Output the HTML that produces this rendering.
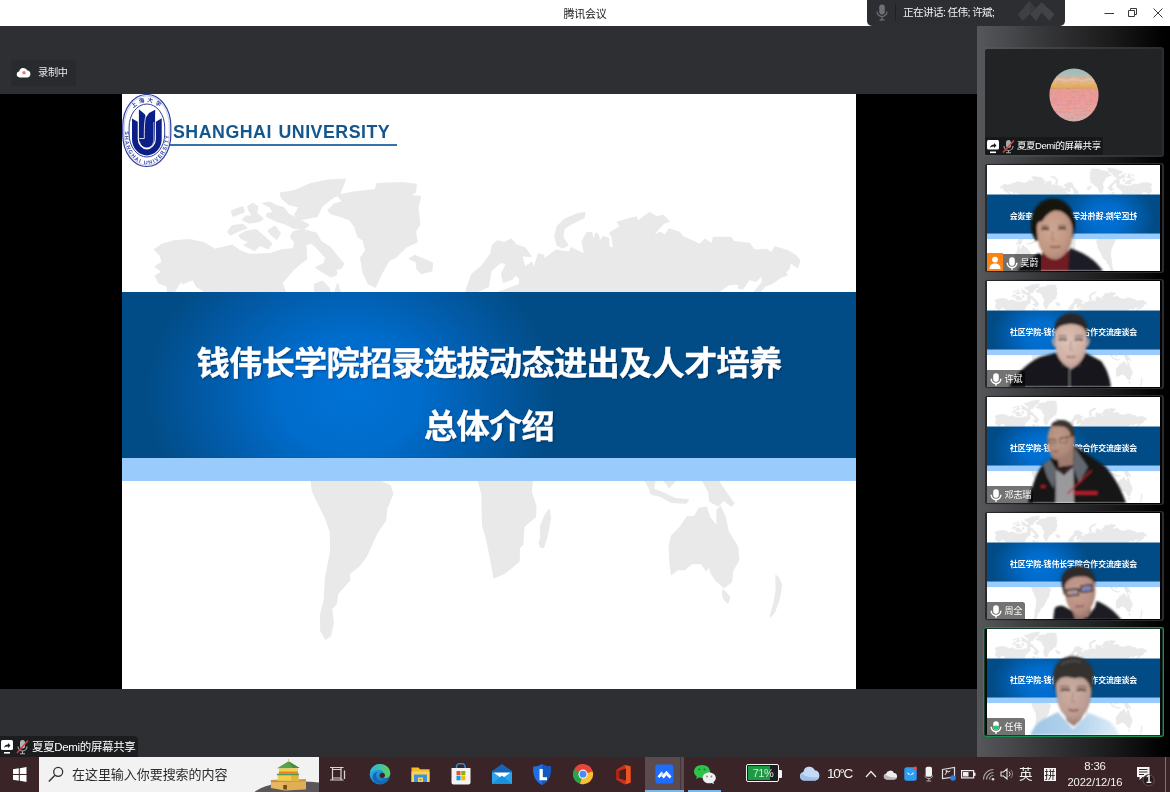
<!DOCTYPE html>
<html lang="zh-CN"><head><meta charset="utf-8"><title>腾讯会议</title>
<style>
html,body{margin:0;padding:0}
body{will-change:transform;width:1170px;height:792px;overflow:hidden;position:relative;background:#2e2f33;font-family:"Liberation Sans","Noto Sans CJK SC",sans-serif;color:#fff}
.a{position:absolute}
svg{display:block;position:absolute;overflow:hidden}
#titlebar{left:0;top:0;width:1170px;height:26px;background:#fff}
#title{left:535px;top:5.5px;width:100px;text-align:center;font-size:11px;line-height:16px;color:#1a1a1a;letter-spacing:-0.3px}
#speak{left:867px;top:0;width:198px;height:26px;background:#2d2e32;border-radius:0 0 5px 5px}
#speak .t{left:36px;top:4px;font-size:10.6px;line-height:16px;color:#f0f0f0;white-space:nowrap;letter-spacing:-0.62px}
#speak .sep{left:28px;top:4px;width:1px;height:17px;background:#1f2023}
#blackL{left:0;top:94px;width:122px;height:595px;background:#000}
#blackR{left:856px;top:94px;width:121px;height:595px;background:#000}
#rec{left:11px;top:60px;width:65px;height:26px;background:#292a2e;border-radius:3px}
#rec .t{left:27px;top:5px;font-size:10.2px;line-height:16px;color:#e6e6e6;white-space:nowrap;letter-spacing:-0.3px}
#slide{left:122px;top:94px;width:734px;height:595px;background:#fff;overflow:hidden}
#hdr{left:51px;top:26px;font-size:17.8px;line-height:24px;font-weight:bold;color:#14578f;letter-spacing:.5px;word-spacing:1.2px;white-space:nowrap}
#hline{left:48px;top:49.5px;width:227px;height:2px;background:#3671aa}
.ttl{left:0;width:734px;text-align:center;font-weight:bold;color:#fff;font-size:33.3px;letter-spacing:-.8px;line-height:44px;white-space:nowrap;-webkit-text-stroke:.35px #fff;text-shadow:1px 1px 2px rgba(0,20,60,.55)}
#panel{left:977px;top:26px;width:193px;height:731px;background:linear-gradient(90deg,#56575b 0%,#494a4d 15%,#3a3b3d 30%,#2a2a2c 50%,#1a1a1b 70%,#0c0c0c 85%,#000 97%)}
.tile{left:6px;width:181px;height:110px;border-radius:3px;background:linear-gradient(90deg,rgba(44,45,48,0) 0%,rgba(44,45,48,.6) 40%,#2c2d30 75%)}
.frame{left:2px;top:1px;width:177px;height:108px;border-radius:2px;background:linear-gradient(90deg,#2a2b2d 0%,#0c0c0d 45%,#000 70%)}
.tile.act{background:#0a0a0b;box-shadow:inset 0 0 0 1px #1d8f55,inset 0 0 0 2px rgba(29,143,85,.4)}
.tile.act .frame{display:none}
.vid{left:4px;top:2px;width:173px;height:106px;overflow:hidden;background:#fff}
.btxt{left:0;top:45.5px;width:173px;text-align:center;font-size:7.9px;line-height:12px;font-weight:bold;color:#fff;white-space:nowrap;letter-spacing:-0.1px}
.lab{left:0;bottom:0;height:17px;background:rgba(0,0,0,.55);border-radius:0 2.5px 0 0}
.lab .n{left:17.5px;top:1.5px;font-size:9px;line-height:14px;color:#fff;white-space:nowrap;letter-spacing:-.1px}
#sharelab{left:0;top:736px;width:138px;height:21px;background:#1c1d1f;border-radius:0 4px 0 0}
#sharelab .t{left:32px;top:3px;font-size:11.5px;line-height:16px;color:#fff;white-space:nowrap;letter-spacing:-0.35px}
#taskbar{left:0;top:757px;width:1170px;height:35px;background:#3a2427}
#search{left:39px;top:0;width:280px;height:35px;background:#f2f2f2;overflow:hidden}
#search .t{left:33px;top:8px;font-size:13px;line-height:20px;color:#2b2b2b;white-space:nowrap;letter-spacing:-0.05px}
.tb{color:#fff;white-space:nowrap}
</style></head><body>

<div id="titlebar" class="a">
<div id="title" class="a">腾讯会议</div>
<svg style="left:1103px;top:6px" width="64" height="14" viewBox="0 0 64 14"><path d="M1.5 7.5H11" stroke="#3a3a3a" stroke-width="1" fill="none"/><path d="M25.5 4.5h6v6h-6zM27.5 4.5v-2h6v6h-2" stroke="#3a3a3a" stroke-width="1" fill="none"/><path d="M50.5 2.5l9 9M59.5 2.5l-9 9" stroke="#3a3a3a" stroke-width="1" fill="none"/></svg>
</div>
<div id="speak" class="a">
<svg style="left:9px;top:4px" width="12" height="17" viewBox="0 0 12 17"><rect x="3.2" y="0.5" width="5.6" height="10" rx="2.8" fill="#6e7075"/><path d="M1 7.5a5 5 0 0 0 10 0M6 12.5V15.5M3.5 15.8h5" stroke="#6e7075" stroke-width="1.2" fill="none"/></svg>
<div class="sep a"></div>
<div class="t a">正在讲话: 任伟; 许斌;</div>
<svg style="left:150px;top:1px" width="40" height="22" viewBox="0 0 40 22"><path d="M.800 13.400L12.400.100 18.500 7 5.800 20.100z" fill="#3e4044"/><path d="M13 12.900L24.700 1.200 37.400 12.900 32.400 20.100 24.700 11.500 19.100 20.100z" fill="#414347"/><path d="M12.400.100L18.500 7 13 12.900z" fill="#393b3f"/></svg>
</div>

<div id="blackL" class="a"></div><div id="blackR" class="a"></div>
<div id="rec" class="a">
<svg style="left:5px;top:7px" width="15" height="11" viewBox="0 0 15 11"><path d="M3.6 10.4a3 3 0 0 1-.4-5.95A4.3 4.3 0 0 1 11.4 3.6a3.45 3.45 0 0 1 .2 6.8z" fill="#fff"/><circle cx="8" cy="5.8" r="1.7" fill="#f0776c"/></svg>
<div class="t a">录制中</div>
</div>
<div id="sharelab" class="a">
<svg style="left:1px;top:4px" width="12" height="14" viewBox="0 0 12 14"><rect x="0" y="0" width="12" height="10" rx="1.5" fill="#fff"/><path d="M3 7.5c.5-2 2-3 4-3V3l2.5 2.5L7 8V6.5c-1.6 0-2.9.3-4 1z" fill="#1c1d1f"/><rect x="3" y="12" width="6" height="1.6" fill="#fff"/></svg>
<svg style="left:16px;top:3px" width="13" height="16" viewBox="0 0 13 16"><rect x="4" y="1" width="5" height="8.5" rx="2.5" fill="#b4b4b4"/><path d="M2 7.5a4.5 4.5 0 0 0 9 0M6.5 12v2.5M4 14.7h5" stroke="#b4b4b4" stroke-width="1.1" fill="none"/><path d="M1 14L12 1.5" stroke="#d5463f" stroke-width="1.4"/></svg>
<div class="t a">夏夏Demi的屏幕共享</div>
</div>

<div id="slide" class="a">
<svg class="a" style="left:0;top:0" width="734" height="595" viewBox="0 0 734 595" preserveAspectRatio="none"><radialGradient id="gm" gradientUnits="userSpaceOnUse" cx="228" cy="300" r="205" gradientTransform="translate(228 300) scale(1 .82) translate(-228 -300)"><stop offset="0" stop-color="#0072d6"/><stop offset=".35" stop-color="#006ccb"/><stop offset=".7" stop-color="#025aa6"/><stop offset="1" stop-color="#014c86"/></radialGradient><g><rect x="0" y="0" width="734" height="595" fill="#fff"/><filter id="mbm"><feGaussianBlur stdDeviation=".7"/></filter><path d="M32.5 155.5L40.2 150.4L52.2 147L67.6 145.7L81.2 148.6L93.2 155.5L110.3 151.2L117.1 156.3L127.4 160.6L147.9 159.8L158.2 156.3L171.8 154.6L172.7 147.8L168.4 142.7L171.8 137.5L182.1 135.8L194.1 139.2L199.2 147.8L207.7 152.9L214.6 161.5L221.6 170L219 174.3L213.9 175.1L214.8 180.3L208.8 182.8L199.2 176.9L194.1 173.4L202.6 169.2L203.6 163.2L199.2 158.5L194.1 152.9L188.9 148.6L183.8 151.2L184.7 164.9L178.7 169.2L171.8 175.1L159.9 188.8L163.3 198L83 198L74.4 192.2L71 185.4L60.7 189.7L59.9 185.4L52.2 198L45.4 198L45.4 192.2L36.8 188.8L33.4 182L40.2 177.7L33.4 172.6L40.2 168.3L38.5 161.5ZM106 137.5L110.3 131.6L120.6 130.4L124.8 134.1L117.1 136.7L108.6 141ZM117.1 141L124 137.5L134.2 135.8L141.1 141.8L149.6 149.5L146.2 154.6L137.7 151.2L132.5 156.3L122.3 151.2L127.4 147.8L118.9 144.4ZM109.5 117L120.6 112.8L122.3 117.9L111.2 122.2ZM125.7 112.8L130.8 109.3L135.9 112.8L134.2 118.7L141.1 124.7L137.7 127.3L127.4 129L120.6 125.6L124 122.2L130.8 122.2L127.4 117ZM146.2 136.7L153 132.4L158.2 139.2L154.8 145.2L149.6 141ZM141.1 109.3L147.9 108.5L154.8 111.9L161.6 113.6L166.7 120.4L173.6 123.9L186.4 130.7L182.1 135L171.8 134.1L163.3 129.8L154.8 127.3L144.5 122.2L145.4 119.6L151.3 118.7L147.9 112.8ZM158.2 99.1L173.6 96.5L188.9 89.7L206 86.3L223.3 85.4L217.3 100.8L212.2 102.5L200.2 111.9L195.1 122.2L188.9 123.5L178.7 125.6L172.7 121.3L177 112.8L166.7 110.2L159.9 104.2ZM178 127.5L186.5 131.6L179 135ZM192.5 190.5L200.2 187.1L207 194L208 198L193 198ZM213 198L215.6 189.7L218.2 198ZM206.2 116.2L212.2 110.2L220.7 107.6L215.6 101.6L231 98.2L253.2 95.7L254.9 89.7L280.6 88.8L294.2 90.5L293.4 98.2L287.4 101.6L298.5 102.5L295.9 113.6L297.7 130.7L293.4 137.5L295.1 147.8L284 152.9L273.7 163.2L266.9 166.6L260 178.6L253.2 193.1L246.4 189.7L241.2 178.6L238.7 164L243.8 156.3L241.2 146.1L236.1 142.7L232.7 132.4L227.6 125.6L217.3 122.2L208.8 119.6ZM287.4 164.9L292.5 161.5L301 164.9L310.5 169.2L309.6 176.9L299.4 179.4L295.1 175.1L294.2 167.5ZM435.4 151.2L432.9 142.7L435.4 132.4L442.3 125.6L455.9 119.6L462.8 118.7L461.9 123.9L450.8 129L442.3 134.1L440.6 142.7L445.7 151.2L440.6 153.8ZM344.8 194L350 180.3L360.2 171.7L368.8 159.8L370.5 151.2L375.6 146.9L382.4 148.6L389.3 145.2L394.4 151.2L403 153.8L408.9 162.3L399.5 161.5L403 173.4L409.8 168.3L411.5 175.1L416.6 159.8L421.8 161.5L421.8 165.7L433.7 156.3L447.4 158.1L449.1 153.8L457.7 158.1L462.8 159.8L460.2 147.8L464.5 139.2L469.6 138.4L471.3 147.8L473.9 139.2L476.5 141L477.3 147.8L481.6 142.7L486.7 144.4L486.7 152.9L491.8 154.6L490.1 142.7L487.6 139.2L498.7 132.4L495.3 128.1L514.1 123L515.8 127.3L527.4 118.7L535.1 123L541.1 121.3L547.1 127.3L541.9 129L530 141.8L538.5 138.4L542.8 141.8L547.1 135L557.3 138.4L560.7 142.7L577.8 150.4L583 145.2L589.8 150.4L591.5 143.5L608.6 143.5L612 147.8L627.4 149.5L632.5 156.3L644.5 155.5L649.6 158.9L653 152.9L665 156.3L673.6 161.5L677.8 166.6L675.3 173.4L668.4 168.3L666.7 175.1L663.3 178.6L665 181.1L658.2 183.7L649.6 189.7L642.8 192.2L637.7 198L632.5 198L640.2 188.8L640.2 181.1L634.2 187.1L627.4 185.4L620.6 194.8L616.3 194L617.1 189.7L606.9 190.5L596.6 198L344 198ZM189.2 387L257.5 387L268.3 391.6L270.7 400L264.7 414.4L263.5 426.4L255.1 438.4L244.3 462.3L237.1 471.9L227.5 479.1L227.5 486.3L215.6 499.5L214.4 509.1L209.6 515.1L211.2 529.5L208.4 541.5L203.6 545.1L198.8 536.7L198.8 519.9L202.4 505.5L203.6 483.9L208.8 457.5L208.4 438.4L203.6 424L194 404.8L190.4 396.4ZM356.4 387L410.3 387L409.1 397.6L413.9 412L413.4 422.8L401.9 432.4L400.7 450.3L397.1 453.9L397.1 467.1L382.7 479.1L372 483.9L369.6 469.5L364.8 445.5L360.7 431.2L360 400ZM427.1 415.6L428.3 424L424.9 443.1L421.4 453.5L418.3 452.7L417 448.5L419 444.3L418.4 433L423 421.6ZM523.2 387L532.8 387L531.6 395.2L541.2 398.8L553.2 404.8L566.3 406L563.9 409.1L549.6 408.4L538.8 402.4L529.2 400L526.8 392.8ZM542.4 387L553.2 387L547.2 393.3ZM580.7 387L596.3 387L603.5 397.6L611.9 409.6L609.5 412L601.1 406L596.3 412L587.9 407.2L586.7 397.6ZM547.2 452.7L549.6 441.9L557.9 433.6L565.1 422.8L572.3 422.8L577.1 414.4L584.3 413.2L587.9 424L595.1 432.4L595.1 415.6L598.7 413.2L603.5 424L605.9 437.2L615.5 452.7L616.7 465.9L610.7 476.7L609.5 487.5L602.3 493.5L593.9 486.3L589.1 479.1L586.7 471.9L584.3 476.7L579.5 469.5L569.9 469.5L562.7 475.5L555.6 475.5L549.6 480.3L548.4 471.9ZM601.1 495.9L604.7 499.5L607.8 503.1L605.9 509.1L602.3 505.5L600.6 500.7ZM653.9 481.5L656.5 483.9L659.6 491.1L657 505.5L652.7 517.5L648.3 522.8L652.3 507.9L654.3 495.9Z" fill="#e9e9e9" stroke="#e9e9e9" stroke-width="1.4" stroke-linejoin="round" filter="url(#mbm)"/><path d="M356 198L367 193L369.6 177L379 169L383.5 170L379 180L381 189L390 186L393.6 182L397 184.5L397 190L386 194L375 198Z" fill="#fff"/><rect x="0" y="198" width="734" height="166.5" fill="url(#gm)"/><rect x="0" y="364" width="734" height="23" fill="#99ccfc"/></g></svg>
<svg style="left:0;top:0" width="52" height="75" viewBox="0 0 52 75">
<rect x=".800" y=".500" width="48" height="72" rx="24" ry="31.500" fill="#fff" stroke="#2f409f" stroke-width="1.200"/>
<rect x="2.300" y="2" width="45" height="69" rx="22.500" ry="30" fill="none" stroke="#8d97cf" stroke-width=".500"/>
<rect x="7.100" y="10" width="35.600" height="53" rx="17.800" ry="23" fill="none" stroke="#2f3f9f" stroke-width="1"/>
<path d="M10 24.600L15.700 27.800V45A9.100 10.400 0 0 0 33.900 45V27.800L39.700 24.200V45A14.850 16.400 0 0 1 10 45z" fill="#0c1f86"/>
<path d="M16.900 15.200L22.600 20L24.300 23L27 19L33.200 15.700L32.800 45A7.900 8.900 0 0 1 16.900 45z" fill="#0c1f86"/>
<path d="M24.300 21C22.700 25 22.300 30 22.300 44.500L17.200 44.600" stroke="#fff" stroke-width=".800" fill="none"/>
<path d="M17.500 47.500C18.500 52 21.500 53.800 25 53.800C29 53.800 31.500 50.500 31.800 45.500V28" stroke="#fff" stroke-width=".700" fill="none" opacity=".85"/>
<path id="lgtop" d="M4.800 30A20.200 24.500 0 0 1 45 30" fill="none"/>
<path id="lgbot" d="M2.700 36V41.500A22.100 28.800 0 0 0 46.900 41.500V36" fill="none"/>
<text font-family="'Liberation Sans','Noto Sans CJK SC',sans-serif" font-size="5.600" font-weight="bold" fill="#2f3f9f" letter-spacing="2.300"><textPath href="#lgtop" startOffset="26%">上海大学</textPath></text>
<text font-family="'Liberation Sans',sans-serif" font-size="5.300" font-weight="bold" fill="#3646a2" letter-spacing="1.250"><textPath href="#lgbot" startOffset="1.500%">SHANGHAI UNIVERSITY</textPath></text>
</svg>

<div id="hdr" class="a">SHANGHAI UNIVERSITY</div>
<div id="hline" class="a"></div>
<div class="ttl a" style="top:248px">钱伟长学院招录选拔动态进出及人才培养</div>
<div class="ttl a" style="top:311px">总体介绍</div>
</div>

<div id="panel" class="a">
<div class="a" style="left:6px;top:21px;width:181px;height:110px;border-radius:3px;background:linear-gradient(90deg,#56575b,#3a3b3e 50%,#2c2d30)"></div><div class="a" style="left:8px;top:23px;width:177px;height:106px;border-radius:2px;background:#222325;overflow:hidden">
<svg style="left:64px;top:19px" width="50" height="54" viewBox="0 0 50 54"><linearGradient id="avg" x1="0" y1="0" x2="0" y2="1"><stop offset="0" stop-color="#a2bcbb"/><stop offset=".12" stop-color="#a8bdb8"/><stop offset=".18" stop-color="#d9b9a0"/><stop offset=".27" stop-color="#e8ba82"/><stop offset=".35" stop-color="#e7b05a"/><stop offset=".375" stop-color="#dfa468"/><stop offset=".4" stop-color="#e9a098"/><stop offset=".6" stop-color="#f09f9a"/><stop offset=".85" stop-color="#e9a9a2"/><stop offset="1" stop-color="#d6b6ae"/></linearGradient><filter id="avn" x="0" y="0" width="100%" height="100%"><feTurbulence type="fractalNoise" baseFrequency=".22 .55" numOctaves="2" seed="7"/><feColorMatrix type="matrix" values="1.4 0 0 0 .1  0 1.4 0 0 0  0 0 2.4 0 -.3  0 0 0 0 1"/></filter><clipPath id="av"><ellipse cx="25" cy="27" rx="24.600" ry="26.500"/></clipPath><g clip-path="url(#av)"><rect width="50" height="54" fill="url(#avg)"/><rect y="8" width="50" height="46" filter="url(#avn)" opacity=".2" style="mix-blend-mode:multiply"/><path d="M3 31h9M20 33h12M30 30h8M8 37h12M24 40h14M6 44h14M26 47h12M14 50h12M36 36h9" stroke="#8f9fd0" stroke-width="1" opacity=".6" stroke-dasharray="3 1.500 1.500 2"/><path d="M2 34h10M36 33h10M12 41h10M34 43h10M20 36h8" stroke="#f58680" stroke-width="1.200" opacity=".7" stroke-dasharray="2.500 1 4 2"/><path d="M6 12l5-1 6 2 7-2 8 2 8-2 6 1" stroke="#e9c0a4" stroke-width="2.200" fill="none" opacity=".8"/></g></svg>
<div class="a" style="left:0;bottom:0;width:118px;height:18px;background:#17181a">
<svg style="left:2px;top:3px" width="12" height="14" viewBox="0 0 12 14"><rect x="0" y="0" width="12" height="9.500" rx="1.500" fill="#fff"/><path d="M3 7.500c.5-2 2-3 4-3V3l2.500 2.500L7 8V6.500c-1.600 0-2.900.3-4 1z" fill="#17181a"/><rect x="3" y="11.500" width="6" height="1.600" fill="#fff"/></svg>
<svg style="left:17px;top:2px" width="13" height="15" viewBox="0 0 13 15"><rect x="4" y="1" width="5" height="8" rx="2.500" fill="#a8a8a8"/><path d="M2 7a4.500 4.500 0 0 0 9 0M6.500 11.500v2M4 13.700h5" stroke="#a8a8a8" stroke-width="1.100" fill="none"/><path d="M1 13.500L12 1.500" stroke="#d5463f" stroke-width="1.400"/></svg>
<div class="a" style="left:32px;top:2px;font-size:9.5px;line-height:14px;white-space:nowrap;letter-spacing:-0.45px">夏夏Demi的屏幕共享</div>
</div></div>
<div class="tile a" style="top:137px;"><div class="frame a"></div><div class="vid a"><svg class="a" style="left:0;top:0" width="173" height="106" viewBox="0 73 734 449" preserveAspectRatio="none"><radialGradient id="gt2" gradientUnits="userSpaceOnUse" cx="228" cy="300" r="205" gradientTransform="translate(228 300) scale(1 .82) translate(-228 -300)"><stop offset="0" stop-color="#0072d6"/><stop offset=".35" stop-color="#006ccb"/><stop offset=".7" stop-color="#025aa6"/><stop offset="1" stop-color="#014c86"/></radialGradient><g transform="translate(734,0) scale(-1,1)"><rect x="0" y="0" width="734" height="595" fill="#fff"/><filter id="mbt2"><feGaussianBlur stdDeviation=".7"/></filter><path d="M32.5 155.5L40.2 150.4L52.2 147L67.6 145.7L81.2 148.6L93.2 155.5L110.3 151.2L117.1 156.3L127.4 160.6L147.9 159.8L158.2 156.3L171.8 154.6L172.7 147.8L168.4 142.7L171.8 137.5L182.1 135.8L194.1 139.2L199.2 147.8L207.7 152.9L214.6 161.5L221.6 170L219 174.3L213.9 175.1L214.8 180.3L208.8 182.8L199.2 176.9L194.1 173.4L202.6 169.2L203.6 163.2L199.2 158.5L194.1 152.9L188.9 148.6L183.8 151.2L184.7 164.9L178.7 169.2L171.8 175.1L159.9 188.8L163.3 198L83 198L74.4 192.2L71 185.4L60.7 189.7L59.9 185.4L52.2 198L45.4 198L45.4 192.2L36.8 188.8L33.4 182L40.2 177.7L33.4 172.6L40.2 168.3L38.5 161.5ZM106 137.5L110.3 131.6L120.6 130.4L124.8 134.1L117.1 136.7L108.6 141ZM117.1 141L124 137.5L134.2 135.8L141.1 141.8L149.6 149.5L146.2 154.6L137.7 151.2L132.5 156.3L122.3 151.2L127.4 147.8L118.9 144.4ZM109.5 117L120.6 112.8L122.3 117.9L111.2 122.2ZM125.7 112.8L130.8 109.3L135.9 112.8L134.2 118.7L141.1 124.7L137.7 127.3L127.4 129L120.6 125.6L124 122.2L130.8 122.2L127.4 117ZM146.2 136.7L153 132.4L158.2 139.2L154.8 145.2L149.6 141ZM141.1 109.3L147.9 108.5L154.8 111.9L161.6 113.6L166.7 120.4L173.6 123.9L186.4 130.7L182.1 135L171.8 134.1L163.3 129.8L154.8 127.3L144.5 122.2L145.4 119.6L151.3 118.7L147.9 112.8ZM158.2 99.1L173.6 96.5L188.9 89.7L206 86.3L223.3 85.4L217.3 100.8L212.2 102.5L200.2 111.9L195.1 122.2L188.9 123.5L178.7 125.6L172.7 121.3L177 112.8L166.7 110.2L159.9 104.2ZM178 127.5L186.5 131.6L179 135ZM192.5 190.5L200.2 187.1L207 194L208 198L193 198ZM213 198L215.6 189.7L218.2 198ZM206.2 116.2L212.2 110.2L220.7 107.6L215.6 101.6L231 98.2L253.2 95.7L254.9 89.7L280.6 88.8L294.2 90.5L293.4 98.2L287.4 101.6L298.5 102.5L295.9 113.6L297.7 130.7L293.4 137.5L295.1 147.8L284 152.9L273.7 163.2L266.9 166.6L260 178.6L253.2 193.1L246.4 189.7L241.2 178.6L238.7 164L243.8 156.3L241.2 146.1L236.1 142.7L232.7 132.4L227.6 125.6L217.3 122.2L208.8 119.6ZM287.4 164.9L292.5 161.5L301 164.9L310.5 169.2L309.6 176.9L299.4 179.4L295.1 175.1L294.2 167.5ZM435.4 151.2L432.9 142.7L435.4 132.4L442.3 125.6L455.9 119.6L462.8 118.7L461.9 123.9L450.8 129L442.3 134.1L440.6 142.7L445.7 151.2L440.6 153.8ZM344.8 194L350 180.3L360.2 171.7L368.8 159.8L370.5 151.2L375.6 146.9L382.4 148.6L389.3 145.2L394.4 151.2L403 153.8L408.9 162.3L399.5 161.5L403 173.4L409.8 168.3L411.5 175.1L416.6 159.8L421.8 161.5L421.8 165.7L433.7 156.3L447.4 158.1L449.1 153.8L457.7 158.1L462.8 159.8L460.2 147.8L464.5 139.2L469.6 138.4L471.3 147.8L473.9 139.2L476.5 141L477.3 147.8L481.6 142.7L486.7 144.4L486.7 152.9L491.8 154.6L490.1 142.7L487.6 139.2L498.7 132.4L495.3 128.1L514.1 123L515.8 127.3L527.4 118.7L535.1 123L541.1 121.3L547.1 127.3L541.9 129L530 141.8L538.5 138.4L542.8 141.8L547.1 135L557.3 138.4L560.7 142.7L577.8 150.4L583 145.2L589.8 150.4L591.5 143.5L608.6 143.5L612 147.8L627.4 149.5L632.5 156.3L644.5 155.5L649.6 158.9L653 152.9L665 156.3L673.6 161.5L677.8 166.6L675.3 173.4L668.4 168.3L666.7 175.1L663.3 178.6L665 181.1L658.2 183.7L649.6 189.7L642.8 192.2L637.7 198L632.5 198L640.2 188.8L640.2 181.1L634.2 187.1L627.4 185.4L620.6 194.8L616.3 194L617.1 189.7L606.9 190.5L596.6 198L344 198ZM189.2 387L257.5 387L268.3 391.6L270.7 400L264.7 414.4L263.5 426.4L255.1 438.4L244.3 462.3L237.1 471.9L227.5 479.1L227.5 486.3L215.6 499.5L214.4 509.1L209.6 515.1L211.2 529.5L208.4 541.5L203.6 545.1L198.8 536.7L198.8 519.9L202.4 505.5L203.6 483.9L208.8 457.5L208.4 438.4L203.6 424L194 404.8L190.4 396.4ZM356.4 387L410.3 387L409.1 397.6L413.9 412L413.4 422.8L401.9 432.4L400.7 450.3L397.1 453.9L397.1 467.1L382.7 479.1L372 483.9L369.6 469.5L364.8 445.5L360.7 431.2L360 400ZM427.1 415.6L428.3 424L424.9 443.1L421.4 453.5L418.3 452.7L417 448.5L419 444.3L418.4 433L423 421.6ZM523.2 387L532.8 387L531.6 395.2L541.2 398.8L553.2 404.8L566.3 406L563.9 409.1L549.6 408.4L538.8 402.4L529.2 400L526.8 392.8ZM542.4 387L553.2 387L547.2 393.3ZM580.7 387L596.3 387L603.5 397.6L611.9 409.6L609.5 412L601.1 406L596.3 412L587.9 407.2L586.7 397.6ZM547.2 452.7L549.6 441.9L557.9 433.6L565.1 422.8L572.3 422.8L577.1 414.4L584.3 413.2L587.9 424L595.1 432.4L595.1 415.6L598.7 413.2L603.5 424L605.9 437.2L615.5 452.7L616.7 465.9L610.7 476.7L609.5 487.5L602.3 493.5L593.9 486.3L589.1 479.1L586.7 471.9L584.3 476.7L579.5 469.5L569.9 469.5L562.7 475.5L555.6 475.5L549.6 480.3L548.4 471.9ZM601.1 495.9L604.7 499.5L607.8 503.1L605.9 509.1L602.3 505.5L600.6 500.7ZM653.9 481.5L656.5 483.9L659.6 491.1L657 505.5L652.7 517.5L648.3 522.8L652.3 507.9L654.3 495.9Z" fill="#e9e9e9" stroke="#e9e9e9" stroke-width="1.4" stroke-linejoin="round" filter="url(#mbt2)"/><path d="M356 198L367 193L369.6 177L379 169L383.5 170L379 180L381 189L390 186L393.6 182L397 184.5L397 190L386 194L375 198Z" fill="#fff"/><rect x="0" y="198" width="734" height="166.5" fill="url(#gt2)"/><rect x="0" y="364" width="734" height="23" fill="#99ccfc"/></g></svg><div class="btxt a" style="transform:scaleX(-1);">社区学院-钱伟长学院合作交流座谈会</div><svg class="a" style="left:0;top:0" width="173" height="106" viewBox="0 0 173 106"><filter id="bp2" x="-10%" y="-10%" width="120%" height="120%"><feGaussianBlur stdDeviation="0.9"/></filter><radialGradient id="sk2" cx=".42" cy=".4" r=".75"><stop offset="0" stop-color="#cfa792"/><stop offset=".6" stop-color="#c09783"/><stop offset="1" stop-color="#9c7868"/></radialGradient><g filter="url(#bp2)"><path d="M30 106C37 98 46 92 52 88L60 96 78 98 83 83C92 86 100 90 106 95 110 98 113 102 116 106z" fill="#1c1f27"/><path d="M53 106L55 88 60 80 80 80 82 88 81 106z" fill="#6f1a22"/><path d="M44 62C43 44 54 33.500 66 33.500 79 33.500 88.500 45 87.800 60 87.500 66 87 70 85 74L49 76C45.500 71 44.200 66 44 62z" fill="#15120f"/><path d="M50 62C50 52 56 45 66 45 78 45 85.500 54 85.600 66 85.600 76 83.500 83 78 89 74 93 71 94.500 68 94.500 62 94.500 56 89 52.500 82 50.500 76 50 70 50 62z" fill="url(#sk2)"/><path d="M48.500 67C49 59 52 55.500 55 56.500 59 50 64 46 69 45.500 75 45.500 80 47 82.500 49.500 85 54 86.300 60 86.700 68L88.500 58C85 43 74 39 64 40 53 41 47 52 47.500 64z" fill="#15120f"/><path d="M54.500 64.500q3.500-2 7.500 0M71.500 64q3.500-2 7.500 0" stroke="#2e1f1b" stroke-width="1.800" fill="none"/><path d="M54 61.500q4-1.500 8 0M71 61q4-1.500 8 0" stroke="#4a3a32" stroke-width=".8" fill="none"/><path d="M66 66l-1.500 8.500 4 .8" stroke="#a27a68" stroke-width="1" fill="none"/><path d="M63 81.500q5.500 1.600 10.500-.3" stroke="#8d4a48" stroke-width="1.500" fill="none"/></g></svg><div class="a" style="left:0;bottom:0;width:16px;height:18px;background:#fa8314"><svg style="left:2px;top:3px" width="12" height="13" viewBox="0 0 12 13"><circle cx="6" cy="3.6" r="2.9" fill="#fff"/><path d="M0.5 13c0-4 2.5-5.6 5.5-5.6s5.500 1.600 5.500 5.600z" fill="#fff"/></svg></div><div class="lab a" style="left:16px;width:38px"><svg style="left:2.5px;top:2.5px" width="12" height="14" viewBox="0 0 12 14"><rect x="3.2" y="0.3" width="5.6" height="8.4" rx="2.8" fill="#fff"/><path d="M1.2 5.800a4.800 4.800 0 0 0 9.600 0" stroke="#fff" stroke-width="1.500" fill="none"/><path d="M6 10.500v2.300" stroke="#fff" stroke-width="1.600" fill="none"/></svg><div class="n a">吴蔚</div></div></div></div><div class="tile a" style="top:253px;"><div class="frame a"></div><div class="vid a"><svg class="a" style="left:0;top:0" width="173" height="106" viewBox="0 73 734 449" preserveAspectRatio="none"><radialGradient id="gt3" gradientUnits="userSpaceOnUse" cx="228" cy="300" r="205" gradientTransform="translate(228 300) scale(1 .82) translate(-228 -300)"><stop offset="0" stop-color="#0072d6"/><stop offset=".35" stop-color="#006ccb"/><stop offset=".7" stop-color="#025aa6"/><stop offset="1" stop-color="#014c86"/></radialGradient><g><rect x="0" y="0" width="734" height="595" fill="#fff"/><filter id="mbt3"><feGaussianBlur stdDeviation=".7"/></filter><path d="M32.5 155.5L40.2 150.4L52.2 147L67.6 145.7L81.2 148.6L93.2 155.5L110.3 151.2L117.1 156.3L127.4 160.6L147.9 159.8L158.2 156.3L171.8 154.6L172.7 147.8L168.4 142.7L171.8 137.5L182.1 135.8L194.1 139.2L199.2 147.8L207.7 152.9L214.6 161.5L221.6 170L219 174.3L213.9 175.1L214.8 180.3L208.8 182.8L199.2 176.9L194.1 173.4L202.6 169.2L203.6 163.2L199.2 158.5L194.1 152.9L188.9 148.6L183.8 151.2L184.7 164.9L178.7 169.2L171.8 175.1L159.9 188.8L163.3 198L83 198L74.4 192.2L71 185.4L60.7 189.7L59.9 185.4L52.2 198L45.4 198L45.4 192.2L36.8 188.8L33.4 182L40.2 177.7L33.4 172.6L40.2 168.3L38.5 161.5ZM106 137.5L110.3 131.6L120.6 130.4L124.8 134.1L117.1 136.7L108.6 141ZM117.1 141L124 137.5L134.2 135.8L141.1 141.8L149.6 149.5L146.2 154.6L137.7 151.2L132.5 156.3L122.3 151.2L127.4 147.8L118.9 144.4ZM109.5 117L120.6 112.8L122.3 117.9L111.2 122.2ZM125.7 112.8L130.8 109.3L135.9 112.8L134.2 118.7L141.1 124.7L137.7 127.3L127.4 129L120.6 125.6L124 122.2L130.8 122.2L127.4 117ZM146.2 136.7L153 132.4L158.2 139.2L154.8 145.2L149.6 141ZM141.1 109.3L147.9 108.5L154.8 111.9L161.6 113.6L166.7 120.4L173.6 123.9L186.4 130.7L182.1 135L171.8 134.1L163.3 129.8L154.8 127.3L144.5 122.2L145.4 119.6L151.3 118.7L147.9 112.8ZM158.2 99.1L173.6 96.5L188.9 89.7L206 86.3L223.3 85.4L217.3 100.8L212.2 102.5L200.2 111.9L195.1 122.2L188.9 123.5L178.7 125.6L172.7 121.3L177 112.8L166.7 110.2L159.9 104.2ZM178 127.5L186.5 131.6L179 135ZM192.5 190.5L200.2 187.1L207 194L208 198L193 198ZM213 198L215.6 189.7L218.2 198ZM206.2 116.2L212.2 110.2L220.7 107.6L215.6 101.6L231 98.2L253.2 95.7L254.9 89.7L280.6 88.8L294.2 90.5L293.4 98.2L287.4 101.6L298.5 102.5L295.9 113.6L297.7 130.7L293.4 137.5L295.1 147.8L284 152.9L273.7 163.2L266.9 166.6L260 178.6L253.2 193.1L246.4 189.7L241.2 178.6L238.7 164L243.8 156.3L241.2 146.1L236.1 142.7L232.7 132.4L227.6 125.6L217.3 122.2L208.8 119.6ZM287.4 164.9L292.5 161.5L301 164.9L310.5 169.2L309.6 176.9L299.4 179.4L295.1 175.1L294.2 167.5ZM435.4 151.2L432.9 142.7L435.4 132.4L442.3 125.6L455.9 119.6L462.8 118.7L461.9 123.9L450.8 129L442.3 134.1L440.6 142.7L445.7 151.2L440.6 153.8ZM344.8 194L350 180.3L360.2 171.7L368.8 159.8L370.5 151.2L375.6 146.9L382.4 148.6L389.3 145.2L394.4 151.2L403 153.8L408.9 162.3L399.5 161.5L403 173.4L409.8 168.3L411.5 175.1L416.6 159.8L421.8 161.5L421.8 165.7L433.7 156.3L447.4 158.1L449.1 153.8L457.7 158.1L462.8 159.8L460.2 147.8L464.5 139.2L469.6 138.4L471.3 147.8L473.9 139.2L476.5 141L477.3 147.8L481.6 142.7L486.7 144.4L486.7 152.9L491.8 154.6L490.1 142.7L487.6 139.2L498.7 132.4L495.3 128.1L514.1 123L515.8 127.3L527.4 118.7L535.1 123L541.1 121.3L547.1 127.3L541.9 129L530 141.8L538.5 138.4L542.8 141.8L547.1 135L557.3 138.4L560.7 142.7L577.8 150.4L583 145.2L589.8 150.4L591.5 143.5L608.6 143.5L612 147.8L627.4 149.5L632.5 156.3L644.5 155.5L649.6 158.9L653 152.9L665 156.3L673.6 161.5L677.8 166.6L675.3 173.4L668.4 168.3L666.7 175.1L663.3 178.6L665 181.1L658.2 183.7L649.6 189.7L642.8 192.2L637.7 198L632.5 198L640.2 188.8L640.2 181.1L634.2 187.1L627.4 185.4L620.6 194.8L616.3 194L617.1 189.7L606.9 190.5L596.6 198L344 198ZM189.2 387L257.5 387L268.3 391.6L270.7 400L264.7 414.4L263.5 426.4L255.1 438.4L244.3 462.3L237.1 471.9L227.5 479.1L227.5 486.3L215.6 499.5L214.4 509.1L209.6 515.1L211.2 529.5L208.4 541.5L203.6 545.1L198.8 536.7L198.8 519.9L202.4 505.5L203.6 483.9L208.8 457.5L208.4 438.4L203.6 424L194 404.8L190.4 396.4ZM356.4 387L410.3 387L409.1 397.6L413.9 412L413.4 422.8L401.9 432.4L400.7 450.3L397.1 453.9L397.1 467.1L382.7 479.1L372 483.9L369.6 469.5L364.8 445.5L360.7 431.2L360 400ZM427.1 415.6L428.3 424L424.9 443.1L421.4 453.5L418.3 452.7L417 448.5L419 444.3L418.4 433L423 421.6ZM523.2 387L532.8 387L531.6 395.2L541.2 398.8L553.2 404.8L566.3 406L563.9 409.1L549.6 408.4L538.8 402.4L529.2 400L526.8 392.8ZM542.4 387L553.2 387L547.2 393.3ZM580.7 387L596.3 387L603.5 397.6L611.9 409.6L609.5 412L601.1 406L596.3 412L587.9 407.2L586.7 397.6ZM547.2 452.7L549.6 441.9L557.9 433.6L565.1 422.8L572.3 422.8L577.1 414.4L584.3 413.2L587.9 424L595.1 432.4L595.1 415.6L598.7 413.2L603.5 424L605.9 437.2L615.5 452.7L616.7 465.9L610.7 476.7L609.5 487.5L602.3 493.5L593.9 486.3L589.1 479.1L586.7 471.9L584.3 476.7L579.5 469.5L569.9 469.5L562.7 475.5L555.6 475.5L549.6 480.3L548.4 471.9ZM601.1 495.9L604.7 499.5L607.8 503.1L605.9 509.1L602.3 505.5L600.6 500.7ZM653.9 481.5L656.5 483.9L659.6 491.1L657 505.5L652.7 517.5L648.3 522.8L652.3 507.9L654.3 495.9Z" fill="#e9e9e9" stroke="#e9e9e9" stroke-width="1.4" stroke-linejoin="round" filter="url(#mbt3)"/><path d="M356 198L367 193L369.6 177L379 169L383.5 170L379 180L381 189L390 186L393.6 182L397 184.5L397 190L386 194L375 198Z" fill="#fff"/><rect x="0" y="198" width="734" height="166.5" fill="url(#gt3)"/><rect x="0" y="364" width="734" height="23" fill="#99ccfc"/></g></svg><div class="btxt a" style="">社区学院-钱伟长学院合作交流座谈会</div><svg class="a" style="left:0;top:0" width="173" height="106" viewBox="0 0 173 106"><filter id="bp3" x="-10%" y="-10%" width="120%" height="120%"><feGaussianBlur stdDeviation="0.9"/></filter><radialGradient id="sk3" cx=".42" cy=".4" r=".75"><stop offset="0" stop-color="#dcc0b4"/><stop offset=".6" stop-color="#d0b0a4"/><stop offset="1" stop-color="#b3948a"/></radialGradient><g filter="url(#bp3)"><path d="M22 106C28 94 40 82 53 76L70 71.500 84 88 98 71.500 114 80C120 88 123 97 124 106z" fill="#18181a"/><path d="M74 70h20v14l-10 6-10-6z" fill="#b3948a"/><path d="M70 72l14 17 14-17v8l-14 12-14-12z" fill="#18181a"/><path d="M82.500 88v18" stroke="#77777b" stroke-width="1.100"/><path d="M67.500 52C66 40 74 32.300 84 32.300 95 32.300 101.500 40 100.200 52L98 60H70z" fill="#2b2725"/><path d="M67.800 58C67 50 70 43.500 84 43 97 43.500 100.500 50 100 58 100 68 98 75 94 80 90 85 87 86.800 84 86.800 80 86.800 76 83 72.500 78 69 72 68 66 67.800 58z" fill="url(#sk3)"/><path d="M66.500 57q-1.500 4 1.500 8M101.200 57q1.500 4-1.500 8" stroke="#c9a698" stroke-width="2" fill="none"/><path d="M71.500 59q4-1.800 8.500 0M87.500 59q4-1.800 8.500 0" stroke="#4a3a35" stroke-width="1.700" fill="none"/><path d="M71 55.500q4.500-1.500 9 0M87.500 55.500q4.500-1.500 9 0" stroke="#5a4640" stroke-width="1" fill="none"/><path d="M70.500 56.500h11v6h-11zM86.500 56.500h11v6h-11z" stroke="#e6dcd8" stroke-width=".5" fill="none" opacity=".7"/><path d="M84 60l-.8 8.500 2.800.6" stroke="#b08e82" stroke-width="1" fill="none"/><path d="M79.500 75.500q4.500 1.200 9 0" stroke="#96665c" stroke-width="1.300" fill="none"/></g></svg><div class="lab a" style="left:0px;width:38px"><svg style="left:2.5px;top:2.5px" width="12" height="14" viewBox="0 0 12 14"><rect x="3.2" y="0.3" width="5.6" height="8.4" rx="2.8" fill="#fff"/><path d="M1.2 5.800a4.800 4.800 0 0 0 9.600 0" stroke="#fff" stroke-width="1.500" fill="none"/><path d="M6 10.500v2.300" stroke="#fff" stroke-width="1.600" fill="none"/></svg><div class="n a">许斌</div></div></div></div><div class="tile a" style="top:369px;"><div class="frame a"></div><div class="vid a"><svg class="a" style="left:0;top:0" width="173" height="106" viewBox="0 73 734 449" preserveAspectRatio="none"><radialGradient id="gt4" gradientUnits="userSpaceOnUse" cx="228" cy="300" r="205" gradientTransform="translate(228 300) scale(1 .82) translate(-228 -300)"><stop offset="0" stop-color="#0072d6"/><stop offset=".35" stop-color="#006ccb"/><stop offset=".7" stop-color="#025aa6"/><stop offset="1" stop-color="#014c86"/></radialGradient><g><rect x="0" y="0" width="734" height="595" fill="#fff"/><filter id="mbt4"><feGaussianBlur stdDeviation=".7"/></filter><path d="M32.5 155.5L40.2 150.4L52.2 147L67.6 145.7L81.2 148.6L93.2 155.5L110.3 151.2L117.1 156.3L127.4 160.6L147.9 159.8L158.2 156.3L171.8 154.6L172.7 147.8L168.4 142.7L171.8 137.5L182.1 135.8L194.1 139.2L199.2 147.8L207.7 152.9L214.6 161.5L221.6 170L219 174.3L213.9 175.1L214.8 180.3L208.8 182.8L199.2 176.9L194.1 173.4L202.6 169.2L203.6 163.2L199.2 158.5L194.1 152.9L188.9 148.6L183.8 151.2L184.7 164.9L178.7 169.2L171.8 175.1L159.9 188.8L163.3 198L83 198L74.4 192.2L71 185.4L60.7 189.7L59.9 185.4L52.2 198L45.4 198L45.4 192.2L36.8 188.8L33.4 182L40.2 177.7L33.4 172.6L40.2 168.3L38.5 161.5ZM106 137.5L110.3 131.6L120.6 130.4L124.8 134.1L117.1 136.7L108.6 141ZM117.1 141L124 137.5L134.2 135.8L141.1 141.8L149.6 149.5L146.2 154.6L137.7 151.2L132.5 156.3L122.3 151.2L127.4 147.8L118.9 144.4ZM109.5 117L120.6 112.8L122.3 117.9L111.2 122.2ZM125.7 112.8L130.8 109.3L135.9 112.8L134.2 118.7L141.1 124.7L137.7 127.3L127.4 129L120.6 125.6L124 122.2L130.8 122.2L127.4 117ZM146.2 136.7L153 132.4L158.2 139.2L154.8 145.2L149.6 141ZM141.1 109.3L147.9 108.5L154.8 111.9L161.6 113.6L166.7 120.4L173.6 123.9L186.4 130.7L182.1 135L171.8 134.1L163.3 129.8L154.8 127.3L144.5 122.2L145.4 119.6L151.3 118.7L147.9 112.8ZM158.2 99.1L173.6 96.5L188.9 89.7L206 86.3L223.3 85.4L217.3 100.8L212.2 102.5L200.2 111.9L195.1 122.2L188.9 123.5L178.7 125.6L172.7 121.3L177 112.8L166.7 110.2L159.9 104.2ZM178 127.5L186.5 131.6L179 135ZM192.5 190.5L200.2 187.1L207 194L208 198L193 198ZM213 198L215.6 189.7L218.2 198ZM206.2 116.2L212.2 110.2L220.7 107.6L215.6 101.6L231 98.2L253.2 95.7L254.9 89.7L280.6 88.8L294.2 90.5L293.4 98.2L287.4 101.6L298.5 102.5L295.9 113.6L297.7 130.7L293.4 137.5L295.1 147.8L284 152.9L273.7 163.2L266.9 166.6L260 178.6L253.2 193.1L246.4 189.7L241.2 178.6L238.7 164L243.8 156.3L241.2 146.1L236.1 142.7L232.7 132.4L227.6 125.6L217.3 122.2L208.8 119.6ZM287.4 164.9L292.5 161.5L301 164.9L310.5 169.2L309.6 176.9L299.4 179.4L295.1 175.1L294.2 167.5ZM435.4 151.2L432.9 142.7L435.4 132.4L442.3 125.6L455.9 119.6L462.8 118.7L461.9 123.9L450.8 129L442.3 134.1L440.6 142.7L445.7 151.2L440.6 153.8ZM344.8 194L350 180.3L360.2 171.7L368.8 159.8L370.5 151.2L375.6 146.9L382.4 148.6L389.3 145.2L394.4 151.2L403 153.8L408.9 162.3L399.5 161.5L403 173.4L409.8 168.3L411.5 175.1L416.6 159.8L421.8 161.5L421.8 165.7L433.7 156.3L447.4 158.1L449.1 153.8L457.7 158.1L462.8 159.8L460.2 147.8L464.5 139.2L469.6 138.4L471.3 147.8L473.9 139.2L476.5 141L477.3 147.8L481.6 142.7L486.7 144.4L486.7 152.9L491.8 154.6L490.1 142.7L487.6 139.2L498.7 132.4L495.3 128.1L514.1 123L515.8 127.3L527.4 118.7L535.1 123L541.1 121.3L547.1 127.3L541.9 129L530 141.8L538.5 138.4L542.8 141.8L547.1 135L557.3 138.4L560.7 142.7L577.8 150.4L583 145.2L589.8 150.4L591.5 143.5L608.6 143.5L612 147.8L627.4 149.5L632.5 156.3L644.5 155.5L649.6 158.9L653 152.9L665 156.3L673.6 161.5L677.8 166.6L675.3 173.4L668.4 168.3L666.7 175.1L663.3 178.6L665 181.1L658.2 183.7L649.6 189.7L642.8 192.2L637.7 198L632.5 198L640.2 188.8L640.2 181.1L634.2 187.1L627.4 185.4L620.6 194.8L616.3 194L617.1 189.7L606.9 190.5L596.6 198L344 198ZM189.2 387L257.5 387L268.3 391.6L270.7 400L264.7 414.4L263.5 426.4L255.1 438.4L244.3 462.3L237.1 471.9L227.5 479.1L227.5 486.3L215.6 499.5L214.4 509.1L209.6 515.1L211.2 529.5L208.4 541.5L203.6 545.1L198.8 536.7L198.8 519.9L202.4 505.5L203.6 483.9L208.8 457.5L208.4 438.4L203.6 424L194 404.8L190.4 396.4ZM356.4 387L410.3 387L409.1 397.6L413.9 412L413.4 422.8L401.9 432.4L400.7 450.3L397.1 453.9L397.1 467.1L382.7 479.1L372 483.9L369.6 469.5L364.8 445.5L360.7 431.2L360 400ZM427.1 415.6L428.3 424L424.9 443.1L421.4 453.5L418.3 452.7L417 448.5L419 444.3L418.4 433L423 421.6ZM523.2 387L532.8 387L531.6 395.2L541.2 398.8L553.2 404.8L566.3 406L563.9 409.1L549.6 408.4L538.8 402.4L529.2 400L526.8 392.8ZM542.4 387L553.2 387L547.2 393.3ZM580.7 387L596.3 387L603.5 397.6L611.9 409.6L609.5 412L601.1 406L596.3 412L587.9 407.2L586.7 397.6ZM547.2 452.7L549.6 441.9L557.9 433.6L565.1 422.8L572.3 422.8L577.1 414.4L584.3 413.2L587.9 424L595.1 432.4L595.1 415.6L598.7 413.2L603.5 424L605.9 437.2L615.5 452.7L616.7 465.9L610.7 476.7L609.5 487.5L602.3 493.5L593.9 486.3L589.1 479.1L586.7 471.9L584.3 476.7L579.5 469.5L569.9 469.5L562.7 475.5L555.6 475.5L549.6 480.3L548.4 471.9ZM601.1 495.9L604.7 499.5L607.8 503.1L605.9 509.1L602.3 505.5L600.6 500.7ZM653.9 481.5L656.5 483.9L659.6 491.1L657 505.5L652.7 517.5L648.3 522.8L652.3 507.9L654.3 495.9Z" fill="#e9e9e9" stroke="#e9e9e9" stroke-width="1.4" stroke-linejoin="round" filter="url(#mbt4)"/><path d="M356 198L367 193L369.6 177L379 169L383.5 170L379 180L381 189L390 186L393.6 182L397 184.5L397 190L386 194L375 198Z" fill="#fff"/><rect x="0" y="198" width="734" height="166.5" fill="url(#gt4)"/><rect x="0" y="364" width="734" height="23" fill="#99ccfc"/></g></svg><div class="btxt a" style="">社区学院-钱伟长学院合作交流座谈会</div><svg class="a" style="left:0;top:0" width="173" height="106" viewBox="0 0 173 106"><filter id="bp4" x="-10%" y="-10%" width="120%" height="120%"><feGaussianBlur stdDeviation="0.9"/></filter><radialGradient id="sk4" cx=".42" cy=".4" r=".75"><stop offset="0" stop-color="#bf9a88"/><stop offset=".6" stop-color="#b08a7a"/><stop offset="1" stop-color="#8e6c60"/></radialGradient><g filter="url(#bp4)"><path d="M41 106C44 92 49 76 56 67L66 60 88 49 106 61 118 69C128 80 135 94 139 106z" fill="#141518"/><path d="M56 67.500L63 62 70 74 67 92 60 80z" fill="#62676e"/><path d="M87.500 50.500L101 70 92 86 86 70z" fill="#62676e"/><path d="M68.500 106L69 73 77 77 86.500 70 87 106z" fill="#9a9a9d"/><path d="M68.500 72l8.500 6.500 9.500-9-1-3.500-9 7-7.500-4z" fill="#3b2226"/><path d="M104.500 73.500L80.500 96.500" stroke="#b81f2a" stroke-width="1.300"/><path d="M86.500 96h24" stroke="#c3202c" stroke-width="3.200"/><path d="M54 89.500h4.500" stroke="#c3202c" stroke-width="2.200"/><path d="M70 58L72 70 86 68 87 50z" fill="#a07c6e"/><path d="M60.500 44C60 34 64 25.500 73 24.500 82 24 87 31 87.500 40 88 48 86 54 82 58 78 62 72 63.500 68 62.500 64 61 61 53 60.500 44z" fill="url(#sk4)"/><path d="M63.500 29C66 24 71 22.800 75 23 82 23.500 87 28 87.800 36L87.500 43 84 41C84 34 80 30 75 29.500 70 29 66 29.500 63.500 29z" fill="#3a3532"/><path d="M84.500 38q3.500 1 2.500 7-1 3-3 2z" fill="#a8806f"/><path d="M61.500 42.500h7.500M72 41.500l8.500-1.500 6-2" stroke="#3c2f2a" stroke-width="1" fill="none"/><path d="M62 42.500v3.500h6.500v-3.500M72.500 41.500v4h7.500v-5" stroke="#4d3d38" stroke-width=".6" fill="none"/><path d="M65.500 54.500h6" stroke="#7a4a42" stroke-width="1.100"/></g></svg><div class="lab a" style="left:0px;width:46px"><svg style="left:2.5px;top:2.5px" width="12" height="14" viewBox="0 0 12 14"><rect x="3.2" y="0.3" width="5.6" height="8.4" rx="2.8" fill="#fff"/><path d="M1.2 5.800a4.800 4.800 0 0 0 9.600 0" stroke="#fff" stroke-width="1.500" fill="none"/><path d="M6 10.500v2.300" stroke="#fff" stroke-width="1.600" fill="none"/></svg><div class="n a">邓志瑞</div></div></div></div><div class="tile a" style="top:485px;"><div class="frame a"></div><div class="vid a"><svg class="a" style="left:0;top:0" width="173" height="106" viewBox="0 73 734 449" preserveAspectRatio="none"><radialGradient id="gt5" gradientUnits="userSpaceOnUse" cx="228" cy="300" r="205" gradientTransform="translate(228 300) scale(1 .82) translate(-228 -300)"><stop offset="0" stop-color="#0072d6"/><stop offset=".35" stop-color="#006ccb"/><stop offset=".7" stop-color="#025aa6"/><stop offset="1" stop-color="#014c86"/></radialGradient><g><rect x="0" y="0" width="734" height="595" fill="#fff"/><filter id="mbt5"><feGaussianBlur stdDeviation=".7"/></filter><path d="M32.5 155.5L40.2 150.4L52.2 147L67.6 145.7L81.2 148.6L93.2 155.5L110.3 151.2L117.1 156.3L127.4 160.6L147.9 159.8L158.2 156.3L171.8 154.6L172.7 147.8L168.4 142.7L171.8 137.5L182.1 135.8L194.1 139.2L199.2 147.8L207.7 152.9L214.6 161.5L221.6 170L219 174.3L213.9 175.1L214.8 180.3L208.8 182.8L199.2 176.9L194.1 173.4L202.6 169.2L203.6 163.2L199.2 158.5L194.1 152.9L188.9 148.6L183.8 151.2L184.7 164.9L178.7 169.2L171.8 175.1L159.9 188.8L163.3 198L83 198L74.4 192.2L71 185.4L60.7 189.7L59.9 185.4L52.2 198L45.4 198L45.4 192.2L36.8 188.8L33.4 182L40.2 177.7L33.4 172.6L40.2 168.3L38.5 161.5ZM106 137.5L110.3 131.6L120.6 130.4L124.8 134.1L117.1 136.7L108.6 141ZM117.1 141L124 137.5L134.2 135.8L141.1 141.8L149.6 149.5L146.2 154.6L137.7 151.2L132.5 156.3L122.3 151.2L127.4 147.8L118.9 144.4ZM109.5 117L120.6 112.8L122.3 117.9L111.2 122.2ZM125.7 112.8L130.8 109.3L135.9 112.8L134.2 118.7L141.1 124.7L137.7 127.3L127.4 129L120.6 125.6L124 122.2L130.8 122.2L127.4 117ZM146.2 136.7L153 132.4L158.2 139.2L154.8 145.2L149.6 141ZM141.1 109.3L147.9 108.5L154.8 111.9L161.6 113.6L166.7 120.4L173.6 123.9L186.4 130.7L182.1 135L171.8 134.1L163.3 129.8L154.8 127.3L144.5 122.2L145.4 119.6L151.3 118.7L147.9 112.8ZM158.2 99.1L173.6 96.5L188.9 89.7L206 86.3L223.3 85.4L217.3 100.8L212.2 102.5L200.2 111.9L195.1 122.2L188.9 123.5L178.7 125.6L172.7 121.3L177 112.8L166.7 110.2L159.9 104.2ZM178 127.5L186.5 131.6L179 135ZM192.5 190.5L200.2 187.1L207 194L208 198L193 198ZM213 198L215.6 189.7L218.2 198ZM206.2 116.2L212.2 110.2L220.7 107.6L215.6 101.6L231 98.2L253.2 95.7L254.9 89.7L280.6 88.8L294.2 90.5L293.4 98.2L287.4 101.6L298.5 102.5L295.9 113.6L297.7 130.7L293.4 137.5L295.1 147.8L284 152.9L273.7 163.2L266.9 166.6L260 178.6L253.2 193.1L246.4 189.7L241.2 178.6L238.7 164L243.8 156.3L241.2 146.1L236.1 142.7L232.7 132.4L227.6 125.6L217.3 122.2L208.8 119.6ZM287.4 164.9L292.5 161.5L301 164.9L310.5 169.2L309.6 176.9L299.4 179.4L295.1 175.1L294.2 167.5ZM435.4 151.2L432.9 142.7L435.4 132.4L442.3 125.6L455.9 119.6L462.8 118.7L461.9 123.9L450.8 129L442.3 134.1L440.6 142.7L445.7 151.2L440.6 153.8ZM344.8 194L350 180.3L360.2 171.7L368.8 159.8L370.5 151.2L375.6 146.9L382.4 148.6L389.3 145.2L394.4 151.2L403 153.8L408.9 162.3L399.5 161.5L403 173.4L409.8 168.3L411.5 175.1L416.6 159.8L421.8 161.5L421.8 165.7L433.7 156.3L447.4 158.1L449.1 153.8L457.7 158.1L462.8 159.8L460.2 147.8L464.5 139.2L469.6 138.4L471.3 147.8L473.9 139.2L476.5 141L477.3 147.8L481.6 142.7L486.7 144.4L486.7 152.9L491.8 154.6L490.1 142.7L487.6 139.2L498.7 132.4L495.3 128.1L514.1 123L515.8 127.3L527.4 118.7L535.1 123L541.1 121.3L547.1 127.3L541.9 129L530 141.8L538.5 138.4L542.8 141.8L547.1 135L557.3 138.4L560.7 142.7L577.8 150.4L583 145.2L589.8 150.4L591.5 143.5L608.6 143.5L612 147.8L627.4 149.5L632.5 156.3L644.5 155.5L649.6 158.9L653 152.9L665 156.3L673.6 161.5L677.8 166.6L675.3 173.4L668.4 168.3L666.7 175.1L663.3 178.6L665 181.1L658.2 183.7L649.6 189.7L642.8 192.2L637.7 198L632.5 198L640.2 188.8L640.2 181.1L634.2 187.1L627.4 185.4L620.6 194.8L616.3 194L617.1 189.7L606.9 190.5L596.6 198L344 198ZM189.2 387L257.5 387L268.3 391.6L270.7 400L264.7 414.4L263.5 426.4L255.1 438.4L244.3 462.3L237.1 471.9L227.5 479.1L227.5 486.3L215.6 499.5L214.4 509.1L209.6 515.1L211.2 529.5L208.4 541.5L203.6 545.1L198.8 536.7L198.8 519.9L202.4 505.5L203.6 483.9L208.8 457.5L208.4 438.4L203.6 424L194 404.8L190.4 396.4ZM356.4 387L410.3 387L409.1 397.6L413.9 412L413.4 422.8L401.9 432.4L400.7 450.3L397.1 453.9L397.1 467.1L382.7 479.1L372 483.9L369.6 469.5L364.8 445.5L360.7 431.2L360 400ZM427.1 415.6L428.3 424L424.9 443.1L421.4 453.5L418.3 452.7L417 448.5L419 444.3L418.4 433L423 421.6ZM523.2 387L532.8 387L531.6 395.2L541.2 398.8L553.2 404.8L566.3 406L563.9 409.1L549.6 408.4L538.8 402.4L529.2 400L526.8 392.8ZM542.4 387L553.2 387L547.2 393.3ZM580.7 387L596.3 387L603.5 397.6L611.9 409.6L609.5 412L601.1 406L596.3 412L587.9 407.2L586.7 397.6ZM547.2 452.7L549.6 441.9L557.9 433.6L565.1 422.8L572.3 422.8L577.1 414.4L584.3 413.2L587.9 424L595.1 432.4L595.1 415.6L598.7 413.2L603.5 424L605.9 437.2L615.5 452.7L616.7 465.9L610.7 476.7L609.5 487.5L602.3 493.5L593.9 486.3L589.1 479.1L586.7 471.9L584.3 476.7L579.5 469.5L569.9 469.5L562.7 475.5L555.6 475.5L549.6 480.3L548.4 471.9ZM601.1 495.9L604.7 499.5L607.8 503.1L605.9 509.1L602.3 505.5L600.6 500.7ZM653.9 481.5L656.5 483.9L659.6 491.1L657 505.5L652.7 517.5L648.3 522.8L652.3 507.9L654.3 495.9Z" fill="#e9e9e9" stroke="#e9e9e9" stroke-width="1.4" stroke-linejoin="round" filter="url(#mbt5)"/><path d="M356 198L367 193L369.6 177L379 169L383.5 170L379 180L381 189L390 186L393.6 182L397 184.5L397 190L386 194L375 198Z" fill="#fff"/><rect x="0" y="198" width="734" height="166.5" fill="url(#gt5)"/><rect x="0" y="364" width="734" height="23" fill="#99ccfc"/></g></svg><div class="btxt a" style="">社区学院-钱伟长学院合作交流座谈会</div><svg class="a" style="left:0;top:0" width="173" height="106" viewBox="0 0 173 106"><filter id="bp5" x="-10%" y="-10%" width="120%" height="120%"><feGaussianBlur stdDeviation="0.9"/></filter><radialGradient id="sk5" cx=".42" cy=".4" r=".75"><stop offset="0" stop-color="#c79e90"/><stop offset=".6" stop-color="#b98f83"/><stop offset="1" stop-color="#97746a"/></radialGradient><g filter="url(#bp5)"><path d="M66 107L67.500 96C69 93 72 92.500 76 93L84 97 100 104 108 94 109.500 88C118 91 128 98 134.500 107z" fill="#1c1d21"/><path d="M82 88h22v12l-8 6h-8z" fill="#97746a"/><path d="M74.500 70C73 60 81 53.300 91.500 53.300 102 53.300 108.500 60 107.800 69L106 80 77 82z" fill="#2d292b"/><path d="M78 76C77 68 82 62.500 92 62 103 62 108.600 68 108.500 77 108.400 86 106 93 101 98.500 98 102 96 103 93.800 103 90 103 85 99 81.500 93.500 78.500 88 78 82 78 76z" fill="url(#sk5)"/><path d="M76.500 78C77 68 84 64 92 63.500 100 63 106 65 108.500 72L108 64C104 55 96 53 90 53.500 80 54.500 74 62 75 72z" fill="#2d292b"/><path d="M79.200 77l11.800-1.200.6 6-11.800 1.200zM93.600 73.200l11.200-1.600.8 6.400-11.200 1.600zM91 77.500l2.600-.6" stroke="#1d1a1e" stroke-width="1.300" fill="none"/><path d="M95 74.500l8.500-1.200.5 4-8.500 1.200z" fill="#5e7ed0" opacity=".75"/><path d="M84 78l5-.5.300 3-5 .5z" fill="#6f8fd8" opacity=".55"/><path d="M88.500 93q4.500 1.400 8.500-.4" stroke="#8a4a48" stroke-width="1.400" fill="none"/></g></svg><div class="lab a" style="left:0px;width:38px"><svg style="left:2.5px;top:2.5px" width="12" height="14" viewBox="0 0 12 14"><rect x="3.2" y="0.3" width="5.6" height="8.4" rx="2.8" fill="#fff"/><path d="M1.2 5.800a4.800 4.800 0 0 0 9.600 0" stroke="#fff" stroke-width="1.500" fill="none"/><path d="M6 10.500v2.300" stroke="#fff" stroke-width="1.600" fill="none"/></svg><div class="n a">周全</div></div></div></div><div class="tile act a" style="top:601px;"><div class="frame a"></div><div class="vid a"><svg class="a" style="left:0;top:0" width="173" height="106" viewBox="0 73 734 449" preserveAspectRatio="none"><radialGradient id="gt6" gradientUnits="userSpaceOnUse" cx="228" cy="300" r="205" gradientTransform="translate(228 300) scale(1 .82) translate(-228 -300)"><stop offset="0" stop-color="#0072d6"/><stop offset=".35" stop-color="#006ccb"/><stop offset=".7" stop-color="#025aa6"/><stop offset="1" stop-color="#014c86"/></radialGradient><g><rect x="0" y="0" width="734" height="595" fill="#fff"/><filter id="mbt6"><feGaussianBlur stdDeviation=".7"/></filter><path d="M32.5 155.5L40.2 150.4L52.2 147L67.6 145.7L81.2 148.6L93.2 155.5L110.3 151.2L117.1 156.3L127.4 160.6L147.9 159.8L158.2 156.3L171.8 154.6L172.7 147.8L168.4 142.7L171.8 137.5L182.1 135.8L194.1 139.2L199.2 147.8L207.7 152.9L214.6 161.5L221.6 170L219 174.3L213.9 175.1L214.8 180.3L208.8 182.8L199.2 176.9L194.1 173.4L202.6 169.2L203.6 163.2L199.2 158.5L194.1 152.9L188.9 148.6L183.8 151.2L184.7 164.9L178.7 169.2L171.8 175.1L159.9 188.8L163.3 198L83 198L74.4 192.2L71 185.4L60.7 189.7L59.9 185.4L52.2 198L45.4 198L45.4 192.2L36.8 188.8L33.4 182L40.2 177.7L33.4 172.6L40.2 168.3L38.5 161.5ZM106 137.5L110.3 131.6L120.6 130.4L124.8 134.1L117.1 136.7L108.6 141ZM117.1 141L124 137.5L134.2 135.8L141.1 141.8L149.6 149.5L146.2 154.6L137.7 151.2L132.5 156.3L122.3 151.2L127.4 147.8L118.9 144.4ZM109.5 117L120.6 112.8L122.3 117.9L111.2 122.2ZM125.7 112.8L130.8 109.3L135.9 112.8L134.2 118.7L141.1 124.7L137.7 127.3L127.4 129L120.6 125.6L124 122.2L130.8 122.2L127.4 117ZM146.2 136.7L153 132.4L158.2 139.2L154.8 145.2L149.6 141ZM141.1 109.3L147.9 108.5L154.8 111.9L161.6 113.6L166.7 120.4L173.6 123.9L186.4 130.7L182.1 135L171.8 134.1L163.3 129.8L154.8 127.3L144.5 122.2L145.4 119.6L151.3 118.7L147.9 112.8ZM158.2 99.1L173.6 96.5L188.9 89.7L206 86.3L223.3 85.4L217.3 100.8L212.2 102.5L200.2 111.9L195.1 122.2L188.9 123.5L178.7 125.6L172.7 121.3L177 112.8L166.7 110.2L159.9 104.2ZM178 127.5L186.5 131.6L179 135ZM192.5 190.5L200.2 187.1L207 194L208 198L193 198ZM213 198L215.6 189.7L218.2 198ZM206.2 116.2L212.2 110.2L220.7 107.6L215.6 101.6L231 98.2L253.2 95.7L254.9 89.7L280.6 88.8L294.2 90.5L293.4 98.2L287.4 101.6L298.5 102.5L295.9 113.6L297.7 130.7L293.4 137.5L295.1 147.8L284 152.9L273.7 163.2L266.9 166.6L260 178.6L253.2 193.1L246.4 189.7L241.2 178.6L238.7 164L243.8 156.3L241.2 146.1L236.1 142.7L232.7 132.4L227.6 125.6L217.3 122.2L208.8 119.6ZM287.4 164.9L292.5 161.5L301 164.9L310.5 169.2L309.6 176.9L299.4 179.4L295.1 175.1L294.2 167.5ZM435.4 151.2L432.9 142.7L435.4 132.4L442.3 125.6L455.9 119.6L462.8 118.7L461.9 123.9L450.8 129L442.3 134.1L440.6 142.7L445.7 151.2L440.6 153.8ZM344.8 194L350 180.3L360.2 171.7L368.8 159.8L370.5 151.2L375.6 146.9L382.4 148.6L389.3 145.2L394.4 151.2L403 153.8L408.9 162.3L399.5 161.5L403 173.4L409.8 168.3L411.5 175.1L416.6 159.8L421.8 161.5L421.8 165.7L433.7 156.3L447.4 158.1L449.1 153.8L457.7 158.1L462.8 159.8L460.2 147.8L464.5 139.2L469.6 138.4L471.3 147.8L473.9 139.2L476.5 141L477.3 147.8L481.6 142.7L486.7 144.4L486.7 152.9L491.8 154.6L490.1 142.7L487.6 139.2L498.7 132.4L495.3 128.1L514.1 123L515.8 127.3L527.4 118.7L535.1 123L541.1 121.3L547.1 127.3L541.9 129L530 141.8L538.5 138.4L542.8 141.8L547.1 135L557.3 138.4L560.7 142.7L577.8 150.4L583 145.2L589.8 150.4L591.5 143.5L608.6 143.5L612 147.8L627.4 149.5L632.5 156.3L644.5 155.5L649.6 158.9L653 152.9L665 156.3L673.6 161.5L677.8 166.6L675.3 173.4L668.4 168.3L666.7 175.1L663.3 178.6L665 181.1L658.2 183.7L649.6 189.7L642.8 192.2L637.7 198L632.5 198L640.2 188.8L640.2 181.1L634.2 187.1L627.4 185.4L620.6 194.8L616.3 194L617.1 189.7L606.9 190.5L596.6 198L344 198ZM189.2 387L257.5 387L268.3 391.6L270.7 400L264.7 414.4L263.5 426.4L255.1 438.4L244.3 462.3L237.1 471.9L227.5 479.1L227.5 486.3L215.6 499.5L214.4 509.1L209.6 515.1L211.2 529.5L208.4 541.5L203.6 545.1L198.8 536.7L198.8 519.9L202.4 505.5L203.6 483.9L208.8 457.5L208.4 438.4L203.6 424L194 404.8L190.4 396.4ZM356.4 387L410.3 387L409.1 397.6L413.9 412L413.4 422.8L401.9 432.4L400.7 450.3L397.1 453.9L397.1 467.1L382.7 479.1L372 483.9L369.6 469.5L364.8 445.5L360.7 431.2L360 400ZM427.1 415.6L428.3 424L424.9 443.1L421.4 453.5L418.3 452.7L417 448.5L419 444.3L418.4 433L423 421.6ZM523.2 387L532.8 387L531.6 395.2L541.2 398.8L553.2 404.8L566.3 406L563.9 409.1L549.6 408.4L538.8 402.4L529.2 400L526.8 392.8ZM542.4 387L553.2 387L547.2 393.3ZM580.7 387L596.3 387L603.5 397.6L611.9 409.6L609.5 412L601.1 406L596.3 412L587.9 407.2L586.7 397.6ZM547.2 452.7L549.6 441.9L557.9 433.6L565.1 422.8L572.3 422.8L577.1 414.4L584.3 413.2L587.9 424L595.1 432.4L595.1 415.6L598.7 413.2L603.5 424L605.9 437.2L615.5 452.7L616.7 465.9L610.7 476.7L609.5 487.5L602.3 493.5L593.9 486.3L589.1 479.1L586.7 471.9L584.3 476.7L579.5 469.5L569.9 469.5L562.7 475.5L555.6 475.5L549.6 480.3L548.4 471.9ZM601.1 495.9L604.7 499.5L607.8 503.1L605.9 509.1L602.3 505.5L600.6 500.7ZM653.9 481.5L656.5 483.9L659.6 491.1L657 505.5L652.7 517.5L648.3 522.8L652.3 507.9L654.3 495.9Z" fill="#e9e9e9" stroke="#e9e9e9" stroke-width="1.4" stroke-linejoin="round" filter="url(#mbt6)"/><path d="M356 198L367 193L369.6 177L379 169L383.5 170L379 180L381 189L390 186L393.6 182L397 184.5L397 190L386 194L375 198Z" fill="#fff"/><rect x="0" y="198" width="734" height="166.5" fill="url(#gt6)"/><rect x="0" y="364" width="734" height="23" fill="#99ccfc"/></g></svg><div class="btxt a" style="">社区学院-钱伟长学院合作交流座谈会</div><svg class="a" style="left:0;top:0" width="173" height="106" viewBox="0 0 173 106"><filter id="bp6" x="-10%" y="-10%" width="120%" height="120%"><feGaussianBlur stdDeviation="0.9"/></filter><radialGradient id="sk6" cx=".42" cy=".4" r=".75"><stop offset="0" stop-color="#ccaea3"/><stop offset=".6" stop-color="#bf9f94"/><stop offset="1" stop-color="#a0837a"/></radialGradient><linearGradient id="sh6" x1="0" y1="0" x2="1" y2="0"><stop offset="0" stop-color="#9fc6e6"/><stop offset=".55" stop-color="#b4d3ec"/><stop offset="1" stop-color="#e2eef7"/></linearGradient><g filter="url(#bp6)"><path d="M43 106C46 99 50 94 55 91L71 83 86 100 102 84 122 92C127 96 130 101 132.500 106z" fill="url(#sh6)"/><path d="M77 83L80 92 86.500 97.500 93.500 91 98 83z" fill="#a68579"/><path d="M66.300 48C66 36 74 27.200 85.200 27.200 97 27.200 106.800 35 106.300 47L104.500 66 69 64z" fill="#34302f"/><path d="M69 58C68.500 50 74 45 86 44.500 98 44.500 104.500 50 104.300 60 104.200 70 102.500 78 98 84 94 89 90 91.200 86.300 91.200 82 91.200 77 87 73.500 81 70 74 69.200 66 69 58z" fill="url(#sk6)"/><path d="M67.500 62C68 52 73 47.500 80 48 84 48 86 50 90 49 96 47.500 102 50 105 64L106.500 46C105 34 96 28 85 28 74 28 66 36 66.300 48z" fill="#34302f"/><path d="M74 36q8-6 20-3" stroke="#5a5656" stroke-width="2" fill="none" opacity=".7"/><path d="M73.500 61.500q4.500-2 9.500 0M89.500 61.500q4.500-2 9.500 0" stroke="#43342f" stroke-width="1.900" fill="none"/><path d="M73 58q5-1.800 10 0M89.500 58q5-1.800 10 0" stroke="#5a4a44" stroke-width="1" fill="none"/><path d="M86 63l-1 9.500 3.500.8" stroke="#a5857a" stroke-width="1" fill="none"/><path d="M81.500 80.500q5 2.200 10 0" stroke="#8a4a50" stroke-width="1.800" fill="none"/></g></svg><div class="lab a" style="left:0px;width:38px"><svg style="left:2.5px;top:2.5px" width="12" height="14" viewBox="0 0 12 14"><rect x="3.2" y="0.3" width="5.6" height="8.4" rx="2.8" fill="#fff"/><rect x="3.200" y="4.800" width="5.600" height="3.900" rx="2.500" fill="#23c768"/><rect x="3.200" y="4.800" width="5.600" height="1.800" fill="#23c768"/><path d="M1.2 5.800a4.800 4.800 0 0 0 9.600 0" stroke="#fff" stroke-width="1.500" fill="none"/><path d="M6 10.500v2.300" stroke="#fff" stroke-width="1.600" fill="none"/></svg><div class="n a">任伟</div></div></div></div>
</div>

<div id="taskbar" class="a">
<svg style="left:12px;top:9px" width="16" height="17" viewBox="0 0 16 17"><path d="M1 3.200L6.800 2.300V8H1zM7.800 2.150L14.500 1v7H7.800zM1 9h5.800v5.700L1 13.800zM7.800 9h6.700v7L7.800 14.850z" fill="#fff"/></svg>
<div id="search" class="a">
<svg style="left:8px;top:8px" width="18" height="19" viewBox="0 0 18 19"><circle cx="11.200" cy="6.800" r="4.500" fill="none" stroke="#333" stroke-width="1.300"/><path d="M8 10.200L1.800 16.600" stroke="#333" stroke-width="1.400"/></svg>
<div class="t a">在这里输入你要搜索的内容</div>
<svg style="left:212px;top:0" width="68" height="35" viewBox="0 0 68 35"><ellipse cx="50" cy="40" rx="49" ry="15.500" fill="#5d5659"/><path d="M19.900 23L27 22.700 27 24 47 24 48 22.500 55 22.300 55 32.200 34 33.500 19.900 31z" fill="#e6b85e"/><path d="M19.900 23L55 22.300V24.500L19.900 25.200z" fill="#c9904c"/><path d="M34 33.500L55 32.200V24.500L34 25z" fill="#dba850" opacity=".6"/><path d="M32.200 28h3.700v4.800l-3.700-.5z" fill="#7a4a1e"/><path d="M26.700 18h20.900v5.800H26.700z" fill="#f2cc4e"/><path d="M40 18h7.600v5.800H40z" fill="#e2b23e"/><path d="M25.600 16.700h22.800l-.8 1.500H26.400z" fill="#4f9a48"/><path d="M27.900 11.200h19.100v5.600H27.900z" fill="#f4cf50"/><path d="M27.900 14.600h19.100v2.200H27.900z" fill="#e87c2a"/><path d="M37.500 4.300L48.600 11 26 11.300z" fill="#58a24e"/><path d="M37.500 4.300L48.600 11 42 11.100z" fill="#468a40"/><path d="M37.500 2v3" stroke="#d8b866" stroke-width=".8"/></svg>
</div>
<svg style="left:329px;top:9px" width="18" height="16" viewBox="0 0 18 16"><path d="M3.500 3.500h8.500v8.500H3.500z" fill="none" stroke="#d8d2d3" stroke-width="1.200"/><path d="M1 1.500h13.500M1 14h13.500" stroke="#d8d2d3" stroke-width="1.200"/><path d="M15.500 4.500v8.500" stroke="#d8d2d3" stroke-width="1.300"/><path d="M3.500 1.500v2M12 1.500v2M3.500 12v2M12 12v2" stroke="#d8d2d3" stroke-width="1.200"/></svg>
<svg style="left:369px;top:6px" width="22" height="22" viewBox="0 0 22 22"><linearGradient id="eg1" x1="0" y1="0" x2="1" y2="1"><stop offset="0" stop-color="#35c1f1"/><stop offset="1" stop-color="#0c59a4"/></linearGradient><linearGradient id="eg2" x1="0" y1="0" x2="1" y2="0"><stop offset="0" stop-color="#2bb4e8"/><stop offset="1" stop-color="#5ed05a"/></linearGradient><circle cx="11" cy="11.200" r="10.300" fill="url(#eg1)"/><path d="M1 9.500C2 4 6.500 1 11 1c5.500 0 10 3.600 10.300 9 0 3-2 5-5 5-2 0-3-1-3-2 1-1 1.200-2 1-3-.6-2.400-3-3.500-5.300-3.300C5.500 7 2.500 8 1 9.500z" fill="url(#eg2)"/><path d="M9 8.500c-2 1.500-2.500 5 0 8 2 2.300 5.500 3 8 1.600-3 3.600-9 3.500-12-.1C2.500 14.500 3.500 9 9 8.500z" fill="#1566b8"/><circle cx="13.300" cy="12.300" r="2.600" fill="#3a2427"/></svg>
<svg style="left:411px;top:9px" width="20" height="17" viewBox="0 0 20 17"><path d="M0.500 1.500h7l1.500 1.800h9.500v12.700H0.500z" fill="#f4b92d"/><path d="M0.500 5.500h18v10.500H0.500z" fill="#fcd354"/><path d="M3 8.500h13v7.500H3z" fill="#3f91dd"/><path d="M7 11.500h5v4.500H7z" fill="#fcd354"/><path d="M8.500 13h2v1.500h-2z" fill="#3f91dd"/></svg>
<svg style="left:450px;top:6px" width="22" height="23" viewBox="0 0 22 23"><path d="M6.500 5.500V3.500a4.300 3 0 0 1 8.600 0v2" fill="none" stroke="#2f8fe0" stroke-width="1.500"/><path d="M1.500 5h19v14.500a2 2 0 0 1-2 2h-15a2 2 0 0 1-2-2z" fill="#f4f2f2"/><rect x="6.500" y="8" width="4" height="4.300" fill="#f25022"/><rect x="11.300" y="8" width="4" height="4.300" fill="#7fba00"/><rect x="6.500" y="13" width="4" height="4.300" fill="#00a4ef"/><rect x="11.300" y="13" width="4" height="4.300" fill="#ffb900"/></svg>
<svg style="left:491px;top:6px" width="22" height="22" viewBox="0 0 22 22"><path d="M1 8L11 1l10 7v3H1z" fill="#1763b5"/><path d="M3 9.500h16v8H3z" fill="#fff"/><path d="M1 8.500l10 7 10-7V21H1z" fill="#2aa4ea"/><path d="M1 21l10-8.500L21 21z" fill="#1a8fdc"/></svg>
<svg style="left:532px;top:6px" width="20" height="23" viewBox="0 0 20 23"><path d="M10 1C7 3 4 3.500 1.200 3.500c-.6 8 1.500 15 8.800 18.500 7.300-3.500 9.400-10.500 8.800-18.500C16 3.500 13 3 10 1z" fill="#1f6fe3"/><path d="M10 1c3 2 6 2.500 8.800 2.500.6 8-1.500 15-8.800 18.500z" fill="#1558c0"/><path d="M7.500 6h3.300v8.300h4.200v3H7.500z" fill="#fff"/></svg>
<svg style="left:572px;top:6px" width="22" height="22" viewBox="0 0 22 22"><circle cx="11" cy="11.200" r="10" fill="#e8453c"/><path d="M11 11.200L2.300 6.200A10 10 0 0 0 8 20.700z" fill="#2ba24c"/><path d="M11 11.200l-3 9.500A10 10 0 0 0 20.600 8.200z" fill="#f7c12d"/><path d="M11 11.200L20.600 8.200A10 10 0 0 0 2.300 6.200z" fill="#e8453c"/><circle cx="11" cy="11.200" r="4.600" fill="#f1f1f1"/><circle cx="11" cy="11.200" r="3.400" fill="#4a8af4"/></svg>
<svg style="left:615px;top:6px" width="18" height="23" viewBox="0 0 18 23"><path d="M1 6.900L9.500 1.800 15.600 3.500V19.800L9.500 21.500 1 16.400z" fill="#c62f1b"/><path d="M10.500 2.100L15.600 3.500V19.800L10.500 21.200z" fill="#ea5520"/><path d="M4.200 7.800L11 5.600V17.600L4.200 15.600z" fill="#4a1f1f"/><path d="M1 6.900L4.200 7.800V15.600L1 16.400z" fill="#a82616"/></svg>
<div class="a" style="left:645px;top:0;width:39px;height:35px;background:#5b4b4f"></div>
<div class="a" style="left:680px;top:0;width:1px;height:33px;background:#44363a"></div>
<div class="a" style="left:645px;top:33px;width:39px;height:2px;background:#7ab8ea"></div>
<div class="a" style="left:688px;top:33px;width:33px;height:2px;background:#7ab8ea"></div>
<svg style="left:655px;top:7px" width="19" height="20" viewBox="0 0 19 20"><rect x="0.300" y="0.600" width="18" height="19" rx="2.500" fill="#1f6dfc"/><path d="M2.500 12.500l4-5 2.200 2.600 2.800-3.400 5 5.800-2 2-3-3.300-2.800 3.300-2.400-2.800-1.800 2.300z" fill="#fff"/><path d="M6.500 7.500l2.200 2.600-2.500 3z" fill="#b9d2ff"/></svg>
<svg style="left:693px;top:7px" width="24" height="22" viewBox="0 0 24 22"><path d="M9 1C4.500 1 1 3.800 1 7.500c0 2 1 3.700 2.800 5L3 15l3-1.500c1 .3 2 .5 3 .5 4.500 0 8-2.800 8-6.500S13.500 1 9 1z" fill="#2dc34c"/><circle cx="6.300" cy="5.500" r="1" fill="#1a7a30"/><circle cx="11.500" cy="5.500" r="1" fill="#1a7a30"/><path d="M16.200 8.500c-3.700 0-6.500 2.400-6.500 5.400s2.800 5.400 6.500 5.400c.8 0 1.600-.1 2.300-.4L21 20l-.6-2c1.500-1 2.400-2.400 2.400-4.100 0-3-2.900-5.400-6.600-5.400z" fill="#efefef"/><circle cx="14" cy="12.500" r=".9" fill="#8a8a8a"/><circle cx="18.400" cy="12.500" r=".9" fill="#8a8a8a"/></svg>
<div class="a" style="left:746px;top:7px;width:33px;height:18px;border:1.500px solid #f4f4f4;border-radius:2px;box-sizing:border-box;background:#1d1d1f"></div>
<div class="a" style="left:748px;top:9px;width:21.500px;height:14px;background:#1d9a44"></div>
<div class="a" style="left:779px;top:13px;width:3px;height:8px;background:#f4f4f4;border-radius:0 1px 1px 0"></div>
<div class="a tb" style="left:748px;top:8px;width:30px;text-align:center;font-size:11px;line-height:16px;color:#d6e4d8;letter-spacing:-0.5px">71%</div>
<svg style="left:799px;top:9px" width="22" height="15" viewBox="0 0 22 15"><path d="M5 14.500a4.300 4.300 0 0 1-.6-8.500A6 6 0 0 1 15.800 4.300a5.200 5.200 0 0 1 .7 10.200z" fill="#c4daf4"/><path d="M5 14.500a4.300 4.300 0 0 1-2.500-7.500c2 3 8 5 17.500 4.500a5 5 0 0 1-3.500 3z" fill="#9dc2ea"/></svg>
<div class="a tb" style="left:827px;top:8px;font-size:13.500px;line-height:18px;letter-spacing:-1.300px;color:#f2f2f2">10°C</div>
<svg style="left:865px;top:13px" width="12" height="8" viewBox="0 0 12 8"><path d="M1 7L6 1.500 11 7" stroke="#eee" stroke-width="1.200" fill="none"/></svg>
<svg style="left:883px;top:13px" width="15" height="10" viewBox="0 0 15 10"><path d="M3.500 9.500a3 3 0 0 1-.3-5.900A4.200 4.200 0 0 1 11 3a3.300 3.300 0 0 1 .5 6.500z" fill="#eee"/><path d="M3.500 9.500a3 3 0 0 1-1.500-5.500c2 2.500 6 3.500 12 3.500a3.300 3.300 0 0 1-2.500 2z" fill="#bdb9ba"/></svg>
<svg style="left:904px;top:9px" width="14" height="15" viewBox="0 0 14 15"><rect x="0.300" y="1.300" width="12.400" height="13.400" rx="2.500" fill="#2f9df2"/><path d="M3 6.500c1 3.500 6 3.500 7 0l-1.500.3-2 2.200-2-2.200z" fill="#d8f0ff"/><circle cx="11.300" cy="2.300" r="1.700" fill="#ef4a4a"/></svg>
<svg style="left:924px;top:9px" width="10" height="16" viewBox="0 0 10 16"><rect x="1.600" y="0.800" width="6.400" height="10" rx="1.800" fill="#f2f2f2"/><path d="M1 9.500c0 4 7.600 4 7.600 0M4.800 12.500v2M2.500 15h4.600" stroke="#bdb7b8" stroke-width="1" fill="none"/></svg>
<svg style="left:941px;top:9px" width="16" height="16" viewBox="0 0 16 16"><path d="M1.500 3.500L13.500 1.500V11L1.500 12.500z" fill="none" stroke="#e4e0e1" stroke-width="1.200"/><path d="M4 9l2-3.500 2 .5 1-1.500" stroke="#e4e0e1" stroke-width="1" fill="none"/><circle cx="5.500" cy="5" r="1" fill="#e4e0e1"/><circle cx="12" cy="12" r="2.800" fill="#2b7fe0"/></svg>
<svg style="left:961px;top:13px" width="15" height="9" viewBox="0 0 15 9"><rect x="0.600" y="0.600" width="12" height="7.300" fill="none" stroke="#eee" stroke-width="1.200"/><rect x="2" y="2" width="5.500" height="4.500" fill="#eee"/><rect x="13" y="2.600" width="1.500" height="3.300" fill="#eee"/></svg>
<svg style="left:982px;top:11px" width="13" height="13" viewBox="0 0 13 13"><path d="M1.500 11.500A10 10 0 0 1 11.500 1.500M4.500 11.500A7 7 0 0 1 11.500 4.500M7.500 11.500A4 4 0 0 1 11.500 7.500" stroke="#a9a3a4" stroke-width="1.200" fill="none"/><circle cx="11" cy="11.300" r="1.300" fill="#ddd"/></svg>
<svg style="left:1000px;top:11px" width="14" height="12" viewBox="0 0 14 12"><path d="M1 4h2.500L7 1v10L3.500 8H1z" fill="none" stroke="#e6e2e3" stroke-width="1.100"/><path d="M9 3.500a3.500 3.500 0 0 1 0 5" stroke="#d6d2d3" stroke-width="1" fill="none"/><path d="M10.800 1.800a6 6 0 0 1 0 8.400" stroke="#8d8587" stroke-width="1" fill="none"/></svg>
<div class="a tb" style="left:1019px;top:8.500px;font-size:13.500px;line-height:18px;color:#f4f4f4">英</div>
<div class="a" style="left:1044px;top:11px;width:12px;height:12.500px;background:#f4f4f4"></div>
<div class="a tb" style="left:1044.500px;top:9.500px;font-size:11px;line-height:16px;color:#1a0e10">拼</div>
<div class="a tb" style="left:1065px;top:2px;width:60px;text-align:center;font-size:11.400px;line-height:15px;color:#f2f2f2;letter-spacing:-0.200px">8:36</div>
<div class="a tb" style="left:1065px;top:18px;width:60px;text-align:center;font-size:11.200px;line-height:15px;color:#f2f2f2;letter-spacing:-0.100px">2022/12/16</div>
<svg style="left:1136px;top:9px" width="20" height="21" viewBox="0 0 20 21"><path d="M1 1h12.500v10H6.500L3.500 14v-3H1z" fill="#f4f4f4"/><path d="M3 3.500h8.500M3 6h8.500M3 8.500h5" stroke="#3a2427" stroke-width="1"/><circle cx="12.600" cy="14.200" r="5.600" fill="#2a1c1e" stroke="#6c5f61" stroke-width=".8"/></svg>
<div class="a tb" style="left:1143.800px;top:16px;width:10px;text-align:center;font-size:10px;line-height:14px;font-weight:bold">1</div>
<div class="a" style="left:1165px;top:0;width:1px;height:35px;background:#7d7173"></div>

</div>

</body></html>
